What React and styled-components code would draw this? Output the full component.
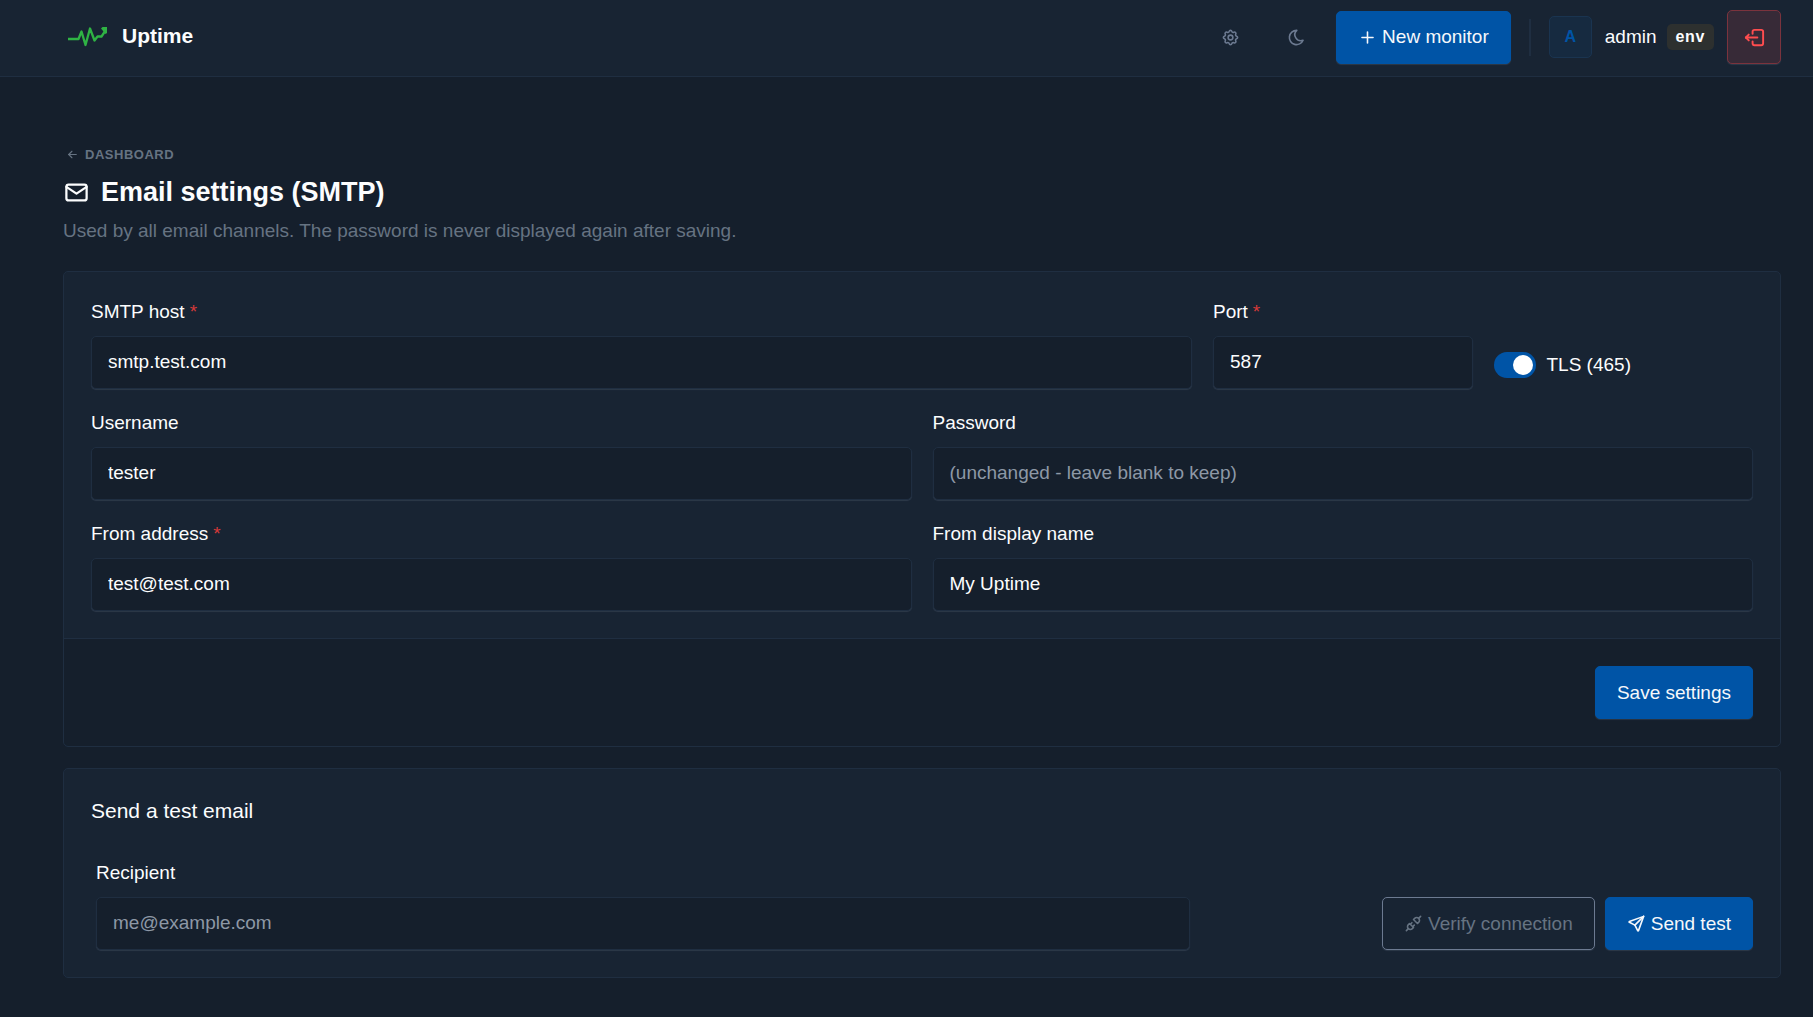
import React, { useState } from 'react'
import styled, { createGlobalStyle, css } from 'styled-components'
import {
  TbArrowLeft,
  TbLogout2,
  TbMail,
  TbMoon,
  TbPlugConnected,
  TbPlus,
  TbSend,
  TbSettings,
} from 'react-icons/tb'

const GlobalStyle = createGlobalStyle`
  *, *::before, *::after {
    box-sizing: border-box;
  }

  body {
    margin: 0;
    background: #151f2c;
    color: #fcfdfe;
    font-family: 'Liberation Sans', Arial, sans-serif;
    font-size: 19px;
    line-height: 28px;
  }

  svg {
    flex: none;
  }

  button, input {
    font: inherit;
    color: inherit;
  }
`

const Page = styled.div`
  min-height: 100vh;
`

const Header = styled.header`
  display: flex;
  align-items: center;
  justify-content: space-between;
  height: 77px;
  padding: 0 32px 2px 67px;
  background: #182433;
  border-bottom: 1px solid #1f2e41;
`

const Brand = styled.a`
  display: flex;
  align-items: center;
  gap: 14px;
  padding-bottom: 2px;
  color: inherit;
  font-size: 21px;
  font-weight: 700;
  text-decoration: none;
`

const HeaderActions = styled.div`
  display: flex;
  align-items: center;
  gap: 14px;
`

const IconButton = styled.button`
  display: flex;
  align-items: center;
  justify-content: center;
  width: 52px;
  height: 52px;
  padding: 0;
  background: none;
  border: 0;
  color: #6c7a91;
  cursor: pointer;
`

const variants = {
  primary: css`
    background: #0054a6;
    border-color: #0054a6;
    color: #f6f8fb;
  `,
  outline: css`
    background: transparent;
    border-color: #6c7a91;
    color: #667382;
  `,
}

const Button = styled.button`
  display: inline-flex;
  align-items: center;
  justify-content: center;
  gap: 5px;
  height: 53px;
  padding: 0 21px;
  border: 1px solid;
  border-radius: 5px;
  box-shadow: 0 1px 1px rgba(130, 144, 165, 0.2);
  white-space: nowrap;
  cursor: pointer;
  ${props => variants[props.$variant || 'primary']}
`

const User = styled.div`
  display: flex;
  align-items: center;
  gap: 13px;
  margin-left: 4px;
  padding-left: 20px;
  background: linear-gradient(#1f2e41, #1f2e41) left center / 2px 37px no-repeat;
`

const Avatar = styled.span`
  display: flex;
  align-items: center;
  justify-content: center;
  width: 43px;
  height: 42px;
  background: #162a40;
  border: 1px solid #1a3450;
  border-radius: 5px;
  color: #0054a6;
  font-size: 16px;
  font-weight: 700;
`

const UserName = styled.span`
  display: flex;
  align-items: center;
  gap: 10px;
`

const Badge = styled.span`
  padding: 0 9px;
  background: #2d302f;
  border-radius: 5px;
  font-size: 16px;
  font-weight: 700;
  line-height: 26px;
  letter-spacing: 0.04em;
`

const LogoutButton = styled(IconButton)`
  width: 54px;
  height: 54px;
  background: #372a37;
  border: 1px solid #7b333d;
  border-radius: 5px;
  box-shadow: 0 1px 1px rgba(130, 144, 165, 0.2);
  color: #ff4d4f;
`

const Main = styled.main`
  display: flex;
  flex-direction: column;
  gap: 21px;
  padding: 67px 32px 39px 63px;
`

const PageHeader = styled.div`
  padding-bottom: 5px;
`

const BackLink = styled.a`
  display: inline-flex;
  align-items: center;
  gap: 6px;
  padding-left: 3px;
  color: #667382;
  font-size: 13px;
  font-weight: 700;
  line-height: 21px;
  letter-spacing: 0.04em;
  text-decoration: none;
  text-transform: uppercase;
  vertical-align: top;
`

const Title = styled.h1`
  display: flex;
  align-items: center;
  gap: 11px;
  margin: 0;
  font-size: 27px;
  line-height: 40px;
`

const Subtitle = styled.p`
  margin: 5px 0 0;
  color: #667382;
`

const Card = styled.section`
  background: #182433;
  border: 1px solid #1f2e41;
  border-radius: 5px;
`

const CardBody = styled.div`
  padding: 27px;
`

const CardFooter = styled.div`
  display: flex;
  justify-content: flex-end;
  padding: 27px;
  background: #151f2c;
  border-top: 1px solid #1f2e41;
  border-radius: 0 0 5px 5px;
`

const CardTitle = styled.h2`
  margin: 0 0 34px;
  font-size: 21px;
  font-weight: 400;
  line-height: 30px;
`

const FieldGrid = styled.div`
  display: grid;
  grid-template-columns: repeat(12, 1fr);
  gap: 21px;
`

const FieldWrapper = styled.div`
  grid-column: span ${props => props.$span || 6};
  display: flex;
  flex-direction: column;
  gap: 11px;
  min-width: 0;
`

const Label = styled.label`
  line-height: 26px;
`

const Required = styled.span`
  margin-left: 5px;
  color: #d63939;
`

const Input = styled.input`
  width: 100%;
  height: 53px;
  padding: 0 16px 2px;
  background: #151f2c;
  border: 1px solid #1f2e41;
  border-radius: 5px;
  box-shadow: 0 1px 1px rgba(130, 144, 165, 0.2);
  outline: none;

  &::placeholder {
    color: #8d98a6;
    opacity: 1;
  }

  &:focus {
    border-color: #0054a6;
  }
`

const SwitchLabel = styled.label`
  grid-column: span 2;
  display: flex;
  align-items: center;
  align-self: end;
  gap: 11px;
  padding-bottom: 10px;
  white-space: nowrap;
  cursor: pointer;
`

const Switch = styled.input`
  appearance: none;
  display: flex;
  align-items: center;
  justify-content: ${props => (props.checked ? 'flex-end' : 'flex-start')};
  width: 42px;
  height: 26px;
  margin: 0;
  padding: 3px;
  background: ${props => (props.checked ? '#0054a6' : '#1f2e41')};
  border-radius: 13px;
  cursor: pointer;

  &::before {
    content: '';
    width: 20px;
    height: 20px;
    background: #fff;
    border-radius: 50%;
  }
`

const TestRow = styled.form`
  display: flex;
  align-items: flex-end;
  justify-content: space-between;
`

const RecipientColumn = styled.div`
  flex: 0 0 66.6667%;
  padding: 0 9px 0 5px;
`

const ButtonList = styled.div`
  display: flex;
  gap: 10px;
`

const Logo = () => (
  <svg width="41" height="22" viewBox="0 0 41 22" fill="none" aria-hidden="true">
    <path
      d="M1 14h10.500l3-7.500 4 13.500L23 3.500l4.500 12 3-4h4l4-6"
      stroke="#2fb344"
      strokeWidth="2.300"
      strokeLinejoin="round"
    />
    <path d="M34 3.500L35.500 2H40v6l-1.500 1z" fill="#2fb344" />
  </svg>
)

const Field = ({ id, label, required, span, ...input }) => (
  <FieldWrapper $span={span}>
    <Label htmlFor={id}>
      {label}
      {required && <Required>*</Required>}
    </Label>
    <Input id={id} name={id} required={required} {...input} />
  </FieldWrapper>
)

const App = () => {
  const [tls, setTls] = useState(true)

  return (
    <Page>
      <GlobalStyle />
      <Header>
        <Brand href="#">
          <Logo />
          Uptime
        </Brand>
        <HeaderActions>
          <IconButton aria-label="Settings">
            <TbSettings size={19} />
          </IconButton>
          <IconButton aria-label="Toggle theme">
            <TbMoon size={19} />
          </IconButton>
          <Button>
            <TbPlus size={19} />
            New monitor
          </Button>
          <User>
            <Avatar>A</Avatar>
            <UserName>
              admin
              <Badge>env</Badge>
            </UserName>
            <LogoutButton aria-label="Log out">
              <TbLogout2 size={23} />
            </LogoutButton>
          </User>
        </HeaderActions>
      </Header>

      <Main>
        <PageHeader>
          <BackLink href="#">
            <TbArrowLeft size={13} />
            Dashboard
          </BackLink>
          <Title>
            <TbMail size={27} />
            Email settings (SMTP)
          </Title>
          <Subtitle>
            Used by all email channels. The password is never displayed again after saving.
          </Subtitle>
        </PageHeader>

        <Card>
          <form onSubmit={e => e.preventDefault()}>
            <CardBody>
              <FieldGrid>
                <Field id="host" label="SMTP host" defaultValue="smtp.test.com" span={8} required />
                <Field id="port" label="Port" defaultValue="587" span={2} required />
                <SwitchLabel>
                  <Switch
                    type="checkbox"
                    role="switch"
                    checked={tls}
                    onChange={e => setTls(e.target.checked)}
                  />
                  TLS (465)
                </SwitchLabel>
                <Field id="username" label="Username" defaultValue="tester" />
                <Field
                  id="password"
                  label="Password"
                  type="password"
                  placeholder="(unchanged - leave blank to keep)"
                />
                <Field id="from" label="From address" defaultValue="test@test.com" required />
                <Field id="display" label="From display name" defaultValue="My Uptime" />
              </FieldGrid>
            </CardBody>
            <CardFooter>
              <Button type="submit">Save settings</Button>
            </CardFooter>
          </form>
        </Card>

        <Card>
          <CardBody>
            <CardTitle>Send a test email</CardTitle>
            <TestRow onSubmit={e => e.preventDefault()}>
              <RecipientColumn>
                <Field id="recipient" label="Recipient" type="email" placeholder="me@example.com" />
              </RecipientColumn>
              <ButtonList>
                <Button type="button" $variant="outline">
                  <TbPlugConnected size={19} />
                  Verify connection
                </Button>
                <Button type="submit">
                  <TbSend size={19} />
                  Send test
                </Button>
              </ButtonList>
            </TestRow>
          </CardBody>
        </Card>
      </Main>
    </Page>
  )
}

export default App
